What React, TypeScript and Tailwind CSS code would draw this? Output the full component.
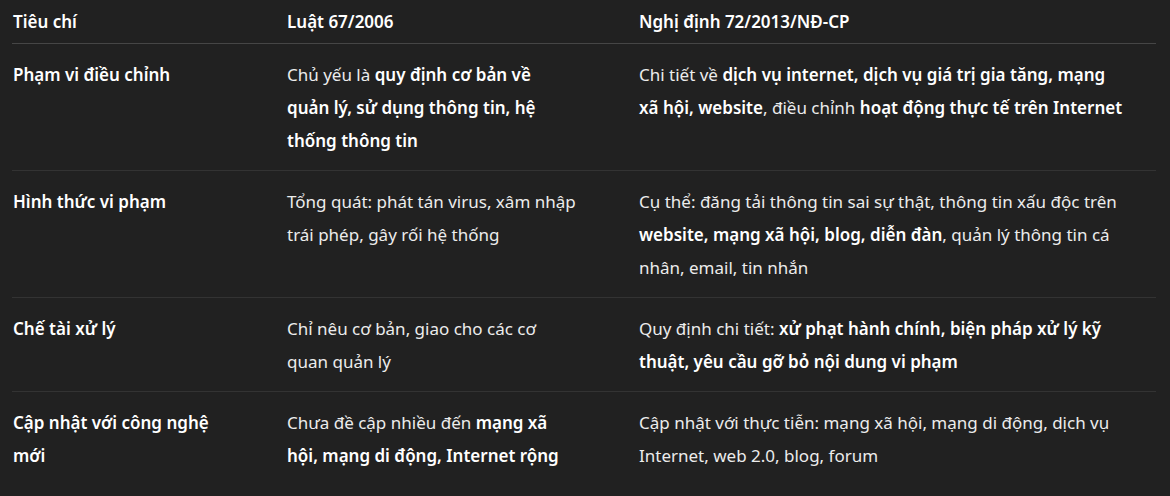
import type { ReactNode } from "react";

type Row = {
  label: ReactNode;
  law: ReactNode;
  decree: ReactNode;
};

const B = ({ children }: { children: ReactNode }) => (
  <strong className="font-semibold text-white">{children}</strong>
);

const rows: Row[] = [
  {
    label: "Phạm vi điều chỉnh",
    law: (
      <>
        Chủ yếu là <B>quy định cơ bản về</B>
        <br />
        <B>quản lý, sử dụng thông tin, hệ</B>
        <br />
        <B>thống thông tin</B>
      </>
    ),
    decree: (
      <>
        Chi tiết về <B>dịch vụ internet, dịch vụ giá trị gia tăng, mạng</B>
        <br />
        <B>xã hội, website</B>, điều chỉnh <B>hoạt động thực tế trên Internet</B>
      </>
    ),
  },
  {
    label: "Hình thức vi phạm",
    law: (
      <>
        Tổng quát: phát tán virus, xâm nhập
        <br />
        trái phép, gây rối hệ thống
      </>
    ),
    decree: (
      <>
        Cụ thể: đăng tải thông tin sai sự thật, thông tin xấu độc trên
        <br />
        <B>website, mạng xã hội, blog, diễn đàn</B>, quản lý thông tin cá
        <br />
        nhân, email, tin nhắn
      </>
    ),
  },
  {
    label: "Chế tài xử lý",
    law: (
      <>
        Chỉ nêu cơ bản, giao cho các cơ
        <br />
        quan quản lý
      </>
    ),
    decree: (
      <>
        Quy định chi tiết: <B>xử phạt hành chính, biện pháp xử lý kỹ</B>
        <br />
        <B>thuật, yêu cầu gỡ bỏ nội dung vi phạm</B>
      </>
    ),
  },
  {
    label: (
      <>
        Cập nhật với công nghệ
        <br />
        mới
      </>
    ),
    law: (
      <>
        Chưa đề cập nhiều đến <B>mạng xã</B>
        <br />
        <B>hội, mạng di động, Internet rộng</B>
      </>
    ),
    decree: (
      <>
        Cập nhật với thực tiễn: mạng xã hội, mạng di động, dịch vụ
        <br />
        Internet, web 2.0, blog, forum
      </>
    ),
  },
];

export default function App() {
  return (
    <div className="min-h-screen bg-[#212121] text-[#ececec] font-['Noto_Sans','Open_Sans',sans-serif] text-[17px] leading-[33px]">
      <div className="ml-[12px] w-[1144px]">
        <div className="grid grid-cols-[275px_352px_1fr] border-b border-[#464646] pt-[5px] pb-[5px] font-semibold text-white">
          <div className="pl-[1px]">Tiêu chí</div>
          <div>Luật 67/2006</div>
          <div>Nghị định 72/2013/NĐ-CP</div>
        </div>
        {rows.map((row, i) => (
          <div
            key={i}
            className={
              "grid grid-cols-[275px_352px_1fr] pt-[14px] pb-[13px] whitespace-nowrap " +
              (i < rows.length - 1 ? "border-b border-[#333333]" : "")
            }
          >
            <div className="pl-[1px] font-semibold text-white">{row.label}</div>
            <div>{row.law}</div>
            <div>{row.decree}</div>
          </div>
        ))}
      </div>
    </div>
  );
}
